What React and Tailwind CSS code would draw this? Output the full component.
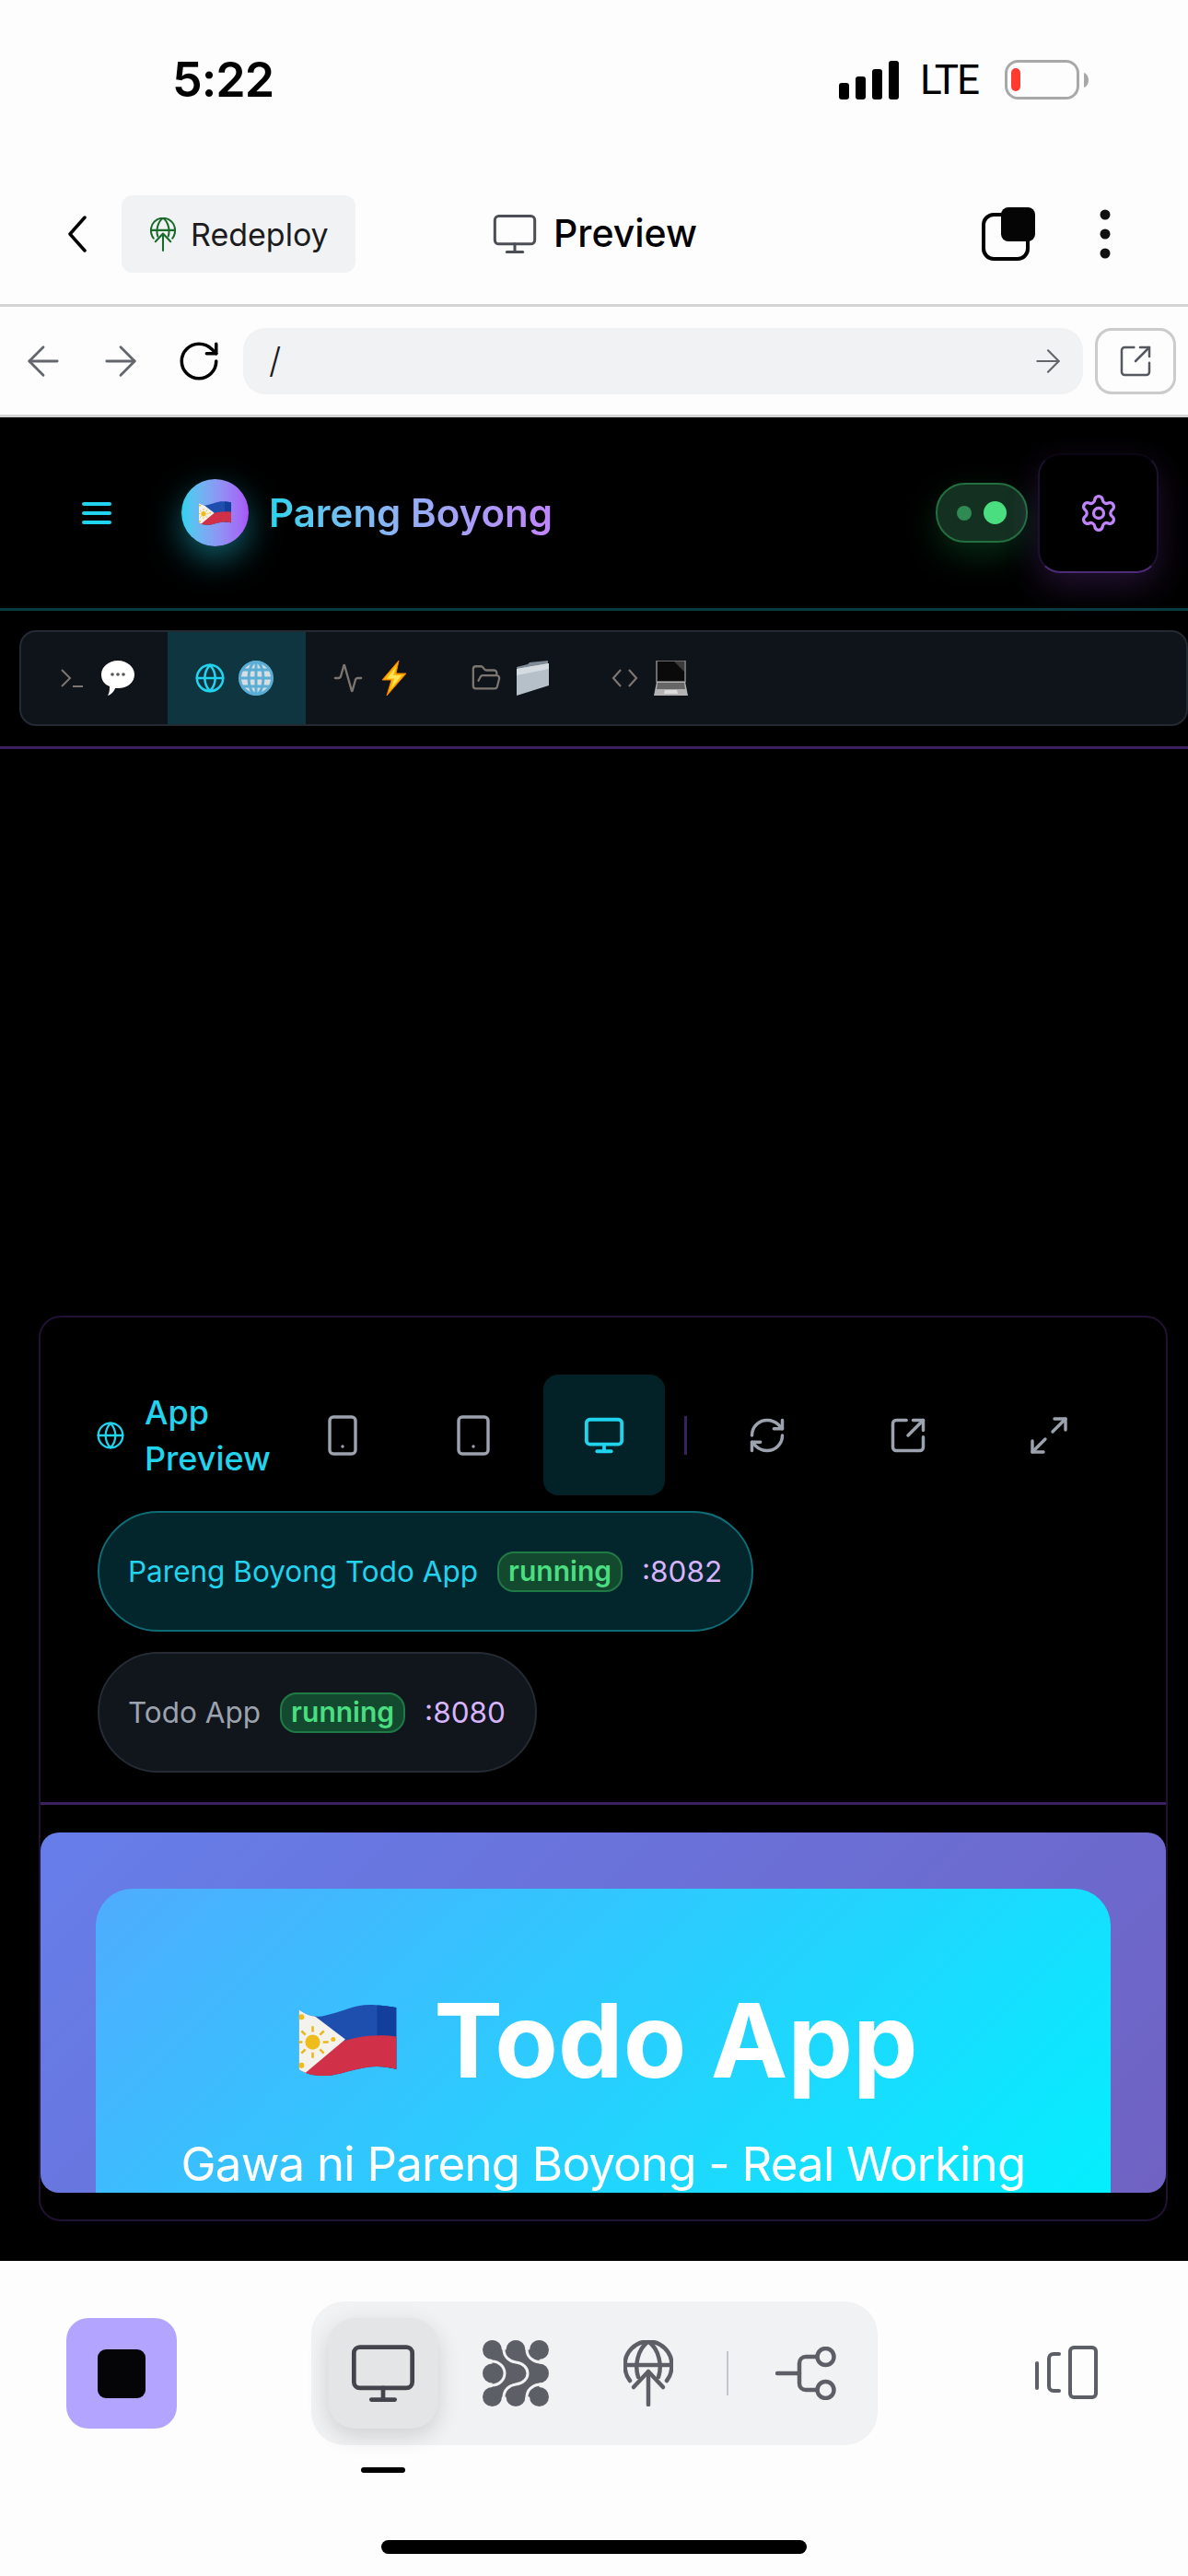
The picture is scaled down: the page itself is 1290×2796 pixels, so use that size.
import {
  ArrowLeft,
  ArrowRight,
  RotateCw,
  SquareArrowOutUpRight,
  Monitor,
  Globe,
  Activity,
  FolderOpen,
  Settings,
  Smartphone,
  Tablet,
  RefreshCw,
  Maximize2,
} from "lucide-react";

function Signal() {
  return (
    <svg width="66" height="42" viewBox="0 0 66 42" fill="#000">
      <rect x="0" y="24" width="11" height="18" rx="3" />
      <rect x="18" y="17" width="11" height="25" rx="3" />
      <rect x="36" y="9" width="11" height="33" rx="3" />
      <rect x="54" y="0" width="11" height="42" rx="3" />
    </svg>
  );
}

function Battery() {
  return (
    <svg width="92" height="44" viewBox="0 0 92 44">
      <rect x="1.5" y="1.5" width="78" height="40" rx="13" fill="none" stroke="#a8a8a8" strokeWidth="3" />
      <rect x="7" y="9" width="10" height="25" rx="5" fill="#ff3b30" />
      <path d="M86 14c3 1 5 4 5 8s-2 7-5 8z" fill="#a8a8a8" />
    </svg>
  );
}

function GlobeUp({ color, width, height, sw }) {
  return (
    <svg width={width} height={height} viewBox="0 0 54 72" fill="none" stroke={color} strokeWidth={sw} strokeLinecap="round" strokeLinejoin="round">
      <path d="M7 44C3 39 1.5 33 1.5 27 1.5 12.5 13 1.5 27 1.5S52.500 12.500 52.500 27c0 6-1.500 12-5.500 17" />
      <path d="M16 40C12 28 15 10 27 1.500 39 10 42 28 38 40" />
      <path d="M1.500 27h51" />
      <path d="M27 70V36" />
      <path d="M11 51l16-17 16 17" />
    </svg>
  );
}

function Blobs() {
  const dots = [
    [10.5, 10.5],
    [36, 10.5],
    [61.5, 10.5],
    [10.5, 36],
    [61.5, 36],
    [10.5, 61.5],
    [36, 61.5],
    [61.5, 61.5],
  ];
  return (
    <svg width="72" height="72" viewBox="0 0 72 72" fill="#5c5f66">
      {dots.map(([x, y]) => (
        <circle key={`${x}-${y}`} cx={x} cy={y} r="10.5" />
      ))}
      <rect x="10.5" y="10.5" width="51" height="51" />
      <g fill="none" stroke="#f1f2f4" strokeWidth="3">
        <path d="M23 -2V10C23 18 29 23 36 24 44 25 49 30 49 36 49 42 44 47 36 48 29 49 23 54 23 62V74" />
        <path d="M48 -2V10C48 18 54 23 62 24H74" />
        <path d="M48 74V62C48 54 54 49 62 48H74" />
        <path d="M-2 23H10C18 23 24 29 24 36 24 43 18 49 10 49H-2" />
      </g>
    </svg>
  );
}

function FlowIcon() {
  return (
    <svg width="66" height="58" viewBox="0 0 66 58" fill="none" stroke="#5c5f66" strokeWidth="4.500" strokeLinecap="round">
      <path d="M2 29h24" />
      <path d="M45 11H33c-4 0-7 3-7 7v22c0 4 3 7 7 7h12" />
      <circle cx="54.500" cy="11" r="9" />
      <circle cx="54.500" cy="47" r="9" />
    </svg>
  );
}

function PanelIcon() {
  return (
    <svg width="68" height="58" viewBox="0 0 68 58" fill="none" stroke="#5c5f66" strokeWidth="4" strokeLinecap="round">
      <rect x="38" y="2" width="28" height="54" rx="4" />
      <path d="M26 9h-6c-3 0-5 2-5 5v30c0 3 2 5 5 5h6" />
      <path d="M2 19v27" />
    </svg>
  );
}

function PhFlag({ width, height }) {
  const rays = [0, 45, 90, 135, 180, 225, 270, 315];
  return (
    <svg width={width} height={height} viewBox="0 0 105 78">
      <defs>
        <clipPath id={`wave${width}`}>
          <path d="M0 6C8 12 16 15 26 13 46 9 60 0 80 1 92 2 100 3 105 4V70C96 68 86 66 74 68 50 72 40 78 26 77 14 77 6 74 0 70Z" />
        </clipPath>
      </defs>
      <g clipPath={`url(#wave${width})`}>
        <rect width="105" height="78" fill="#1f4fae" />
        <rect x="84" width="21" height="78" fill="#123f9c" />
        <path d="M36 44C60 34 85 32 105 35V80H0V75Z" fill="#d03048" />
        <path d="M0 0L50 38 0 80Z" fill="#f4f2ec" />
        <g stroke="#e8b818" strokeWidth="2.500">
          {rays.map((a) => (
            <path key={a} d="M15 24V30" transform={`rotate(${a} 15 41)`} />
          ))}
        </g>
        <circle cx="15" cy="41" r="8" fill="#eebd1c" />
        <circle cx="3" cy="14" r="3" fill="#eebd1c" />
        <circle cx="3" cy="66" r="3" fill="#eebd1c" />
        <circle cx="37" cy="38" r="2.500" fill="#eebd1c" />
      </g>
    </svg>
  );
}

function Bubble() {
  return (
    <svg width="38" height="40" viewBox="0 0 38 40">
      <path d="M19 1c10 0 18 7 18 15 0 9-8 15-18 15-1 0-2 0-3 0-1 3-4 7-8 8 2-3 2-7 2-10C4 27 1 22 1 16 1 8 9 1 19 1z" fill="#fff" />
      <circle cx="13" cy="16" r="1.800" fill="#555" />
      <circle cx="19" cy="16" r="1.800" fill="#555" />
      <circle cx="25" cy="16" r="1.800" fill="#555" />
    </svg>
  );
}

function GlobeEmoji() {
  return (
    <svg width="38" height="40" viewBox="0 0 38 40" fill="none">
      <circle cx="19" cy="20" r="18.500" fill="#d7dde0" />
      <g stroke="#5aaed6" strokeWidth="3">
        <circle cx="19" cy="20" r="17.500" />
        <ellipse cx="19" cy="20" rx="8" ry="17.500" />
        <path d="M19 2v36M2 20h34M4 11h30M4 29h30" />
      </g>
    </svg>
  );
}

function Bolt() {
  return (
    <svg width="28" height="38" viewBox="0 0 28 38">
      <path d="M19 0L1 21h10L6 38l21-24H16z" fill="#ffb300" stroke="#f57c00" strokeWidth="1" />
      <path d="M16 7L6 19.500h8L11 30l11-14h-9z" fill="#ffe45c" />
    </svg>
  );
}

function FolderEmoji() {
  return (
    <svg width="37" height="38" viewBox="0 0 37 38">
      <path d="M1 7l12-3 2-2 20-2v4L2 12z" fill="#7e8a96" />
      <path d="M1 9l35-6v24L1 38z" fill="#b6c0c8" />
      <path d="M1 9l35-6v6L1 16z" fill="#d5dce1" />
    </svg>
  );
}

function LaptopEmoji() {
  return (
    <svg width="37" height="38" viewBox="0 0 37 38">
      <path d="M3 0h31v23H3z" fill="#0a0a0a" stroke="#8b8b8b" strokeWidth="1.500" />
      <path d="M22 1h11v11z" fill="#3a3a3a" />
      <path d="M3 23h31l3 15H0z" fill="#b4b4b4" />
      <path d="M4 24h29l1 7H3z" fill="#666" />
      <path d="M12 32h13l1 4H11z" fill="#dcdcdc" />
    </svg>
  );
}

function TerminalGlyph() {
  return (
    <svg width="24" height="20" viewBox="0 0 24 20" fill="none" stroke="#7d7670" strokeWidth="2">
      <path d="M1 1l9 9-9 9" />
      <path d="M13 19h11" />
    </svg>
  );
}

function CodeGlyph() {
  return (
    <svg width="29" height="20" viewBox="0 0 29 20" fill="none" stroke="#7d7670" strokeWidth="2.200">
      <path d="M10 1L2 10l8 9" />
      <path d="M19 1l8 9-8 9" />
    </svg>
  );
}

function Tab({ icon, emoji, active }) {
  return (
    <div className={`flex h-full w-[150px] items-center gap-[14px] pl-[29px] ${active ? "bg-[#0f3540]" : ""}`}>
      <div className="flex w-[34px] justify-center">{icon}</div>
      <div className="flex w-[38px] justify-center">{emoji}</div>
    </div>
  );
}

function ToolBtn({ children, active }) {
  return (
    <div className={`flex h-[131px] w-[132px] items-center justify-center rounded-[16px] ${active ? "bg-[#032228]" : ""}`}>
      {children}
    </div>
  );
}

function ServicePill({ name, port, active }) {
  return (
    <div
      className={`flex h-[131px] w-fit items-center gap-[21px] rounded-full border-2 pl-[31px] pr-[32px] text-[31.5px] ${
        active ? "border-[#0f6b75] bg-[#03252c] text-[#22d3ee]" : "border-[#252b34] bg-[#11151c] text-[#9ca3af]"
      }`}
    >
      <span>{name}</span>
      <span className="flex h-[44px] items-center rounded-[18px] border-2 border-[#1f7a45] bg-[#134a2f] px-[10px] text-[30px] font-semibold text-[#4ade80]">
        running
      </span>
      <span className="text-[#d8b4fe]">{port}</span>
    </div>
  );
}

export default function App() {
  return (
    <div className="flex h-[2796px] w-[1290px] flex-col overflow-hidden bg-[#fdfdfd] font-['Inter',sans-serif]">
      {/* status bar */}
      <div className="flex h-[174px] items-center justify-between pl-[187px] pr-[107px] text-black">
        <span className="text-[52px] font-semibold leading-none tracking-[-1px]">5:22</span>
        <div className="flex items-center">
          <Signal />
          <span className="ml-[22px] mr-[29px] font-['Roboto',sans-serif] text-[44px] leading-none tracking-[-2px]">LTE</span>
          <Battery />
        </div>
      </div>

      {/* top toolbar */}
      <div className="flex h-[156px] items-center pt-[4px] pl-[73px] pr-[84px]">
        <svg width="22" height="40" viewBox="0 0 22 40" fill="none" stroke="#000" strokeWidth="3.500" strokeLinecap="round" strokeLinejoin="round">
          <path d="M19 2L3 20l16 18" />
        </svg>
        <div className="ml-[37px] flex h-[84px] w-[254px] items-center gap-[16px] rounded-[12px] bg-[#f1f2f4] pl-[31px]">
          <GlobeUp color="#1a6b2a" width={28} height={37} sw={4} />
          <span className="text-[34px] text-[#1c1c1e]">Redeploy</span>
        </div>
        <div className="ml-[147px] flex items-center gap-[16px]">
          <Monitor size={52} strokeWidth={1.4} className="text-[#4b4e55]" />
          <span className="text-[41px] font-medium text-black">Preview</span>
        </div>
        <div className="ml-auto flex items-center gap-[70px]">
          <svg width="58" height="58" viewBox="0 0 58 58">
            <rect x="2" y="8" width="48" height="48" rx="11" fill="#fdfdfd" stroke="#000" strokeWidth="4" />
            <rect x="21" y="0" width="37" height="37" rx="8" fill="#050505" />
          </svg>
          <svg width="12" height="54" viewBox="0 0 12 54" fill="#111">
            <circle cx="6" cy="6" r="5.500" />
            <circle cx="6" cy="27" r="5.500" />
            <circle cx="6" cy="48" r="5.500" />
          </svg>
        </div>
      </div>
      <div className="h-[3px] bg-[#d4d4d4]" />

      {/* url row */}
      <div className="flex h-[117px] items-center pl-[21px]">
        <ArrowLeft size={52} strokeWidth={1.3} className="text-[#63666d]" />
        <ArrowRight size={52} strokeWidth={1.3} className="ml-[32px] text-[#63666d]" />
        <RotateCw size={50} strokeWidth={1.7} className="ml-[34px] text-black" />
        <div className="ml-[23px] flex h-[72px] w-[912px] items-center justify-between rounded-[24px] bg-[#f1f2f4] pl-[28px] pr-[18px]">
          <span className="text-[38px] font-light text-[#1c1c1e]">/</span>
          <ArrowRight size={40} strokeWidth={1.3} className="text-[#63666d]" />
        </div>
        <div className="ml-[13px] flex h-[72px] w-[88px] items-center justify-center rounded-[18px] border-[3px] border-[#cbcbcb]">
          <SquareArrowOutUpRight size={40} strokeWidth={1.5} className="text-[#55585f]" />
        </div>
      </div>
      <div className="h-[3px] bg-[#d4d4d4]" />

      {/* dark app */}
      <div className="flex h-[2001px] flex-col bg-black">
        <div className="flex h-[207px] shrink-0 items-center pl-[89px] pr-[32px]">
          <div className="flex w-[32px] flex-col gap-[6px]">
            <div className="h-[4px] rounded-full bg-[#22d3ee]" />
            <div className="h-[4px] rounded-full bg-[#22d3ee]" />
            <div className="h-[4px] rounded-full bg-[#22d3ee]" />
          </div>
          <div className="ml-[76px] flex h-[73px] w-[73px] items-center justify-center rounded-full bg-linear-to-r from-[#22d3ee] to-[#a855f7] shadow-[0_14px_36px_rgba(34,211,238,0.45)]">
            <PhFlag width={35} height={26} />
          </div>
          <span className="ml-[22px] bg-linear-to-r from-[#22d3ee] to-[#c084fc] bg-clip-text text-[42px] font-semibold text-transparent">
            Pareng Boyong
          </span>
          <div className="ml-auto flex h-[65px] w-[100px] items-center gap-[13px] rounded-[32px] border-2 border-[#22703f] bg-[#143021] pl-[21px] shadow-[0_14px_36px_rgba(34,197,94,0.22)]">
            <div className="h-[16px] w-[16px] rounded-full bg-[#2f8a54]" />
            <div className="h-[25px] w-[25px] rounded-full bg-[#4ade80]" />
          </div>
          <div className="ml-[11px] flex h-[130px] w-[131px] items-center justify-center rounded-[24px] border-2 border-x-[#1c1130] border-t-[#0c0614] border-b-[#4c2a78] bg-black shadow-[0_14px_36px_rgba(168,85,247,0.2)]">
            <Settings size={44} strokeWidth={1.8} className="text-[#c084fc]" />
          </div>
        </div>
        <div className="h-[3px] shrink-0 bg-[#0a3a42]" />

        {/* tabs */}
        <div className="mt-[21px] ml-[21px] flex h-[104px] shrink-0 items-stretch overflow-hidden rounded-[18px] border-2 border-[#232a33] bg-[#0f141a] pl-[9px]">
          <Tab icon={<TerminalGlyph />} emoji={<Bubble />} />
          <Tab icon={<Globe size={34} strokeWidth={1.8} className="text-[#22d3ee]" />} emoji={<GlobeEmoji />} active />
          <Tab icon={<Activity size={34} strokeWidth={1.6} className="text-[#7d7670]" />} emoji={<Bolt />} />
          <Tab icon={<FolderOpen size={34} strokeWidth={1.6} className="text-[#7d7670]" />} emoji={<FolderEmoji />} />
          <Tab icon={<CodeGlyph />} emoji={<LaptopEmoji />} />
        </div>
        <div className="mt-[22px] h-[3px] shrink-0 bg-[#3b1f5e]" />

        {/* preview card */}
        <div className="mt-[615px] ml-[42px] flex h-[983px] w-[1226px] shrink-0 flex-col rounded-[24px] border-2 border-[#1f1233]">
          <div className="mt-[62px] flex items-center pl-[60px]">
            <Globe size={32} strokeWidth={1.7} className="text-[#22d3ee]" />
            <span className="ml-[21px] w-[149px] text-[36px] font-medium leading-[50px] text-[#22d3ee]">App Preview</span>
            <ToolBtn>
              <Smartphone size={48} strokeWidth={1.7} className="text-[#9ca3af]" />
            </ToolBtn>
            <div className="ml-[10px]" />
            <ToolBtn>
              <Tablet size={48} strokeWidth={1.7} className="text-[#9ca3af]" />
            </ToolBtn>
            <div className="ml-[10px]" />
            <ToolBtn active>
              <Monitor size={46} strokeWidth={2} className="text-[#22d3ee]" />
            </ToolBtn>
            <div className="mx-[21px] h-[42px] w-[3px] bg-[#3b1f5e]" />
            <ToolBtn>
              <RefreshCw size={44} strokeWidth={1.9} className="text-[#9ca3af]" />
            </ToolBtn>
            <div className="ml-[21px]" />
            <ToolBtn>
              <SquareArrowOutUpRight size={44} strokeWidth={1.9} className="text-[#9ca3af]" />
            </ToolBtn>
            <div className="ml-[21px]" />
            <ToolBtn>
              <Maximize2 size={48} strokeWidth={1.7} className="text-[#9ca3af]" />
            </ToolBtn>
          </div>
          <div className="mt-[17px] flex flex-col gap-[22px] pl-[62px]">
            <ServicePill name="Pareng Boyong Todo App" port=":8082" active />
            <ServicePill name="Todo App" port=":8080" />
          </div>
          <div className="mt-[32px] h-[3px] shrink-0 bg-[#3b1f5e]" />
          <div className="mt-[30px] h-[391px] shrink-0 overflow-hidden rounded-[20px] bg-[linear-gradient(135deg,#667eea,#764ba2_180%)] px-[60px] pt-[61px]">
            <div className="h-[400px] rounded-t-[40px] bg-[linear-gradient(135deg,#4facfe,#00f2fe)] pt-[94px] text-center text-white">
              <div className="ml-[11px] flex items-center justify-center gap-[40px] leading-none">
                <PhFlag width={107} height={79} />
                <span className="text-[112px] font-bold leading-[140px]">Todo App</span>
              </div>
              <div className="mt-[34px] text-[51px] leading-[62px] tracking-[-0.8px]">Gawa ni Pareng Boyong - Real Working</div>
            </div>
          </div>
        </div>
      </div>

      {/* bottom nav */}
      <div className="flex flex-1 flex-col">
        <div className="flex items-start pl-[72px] pt-[44px]">
          <div className="mt-[18px] flex h-[120px] w-[120px] items-center justify-center rounded-[24px] bg-[#b3a5ff]">
            <div className="h-[53px] w-[52px] rounded-[9px] bg-[#050507]" />
          </div>
          <div className="ml-[146px] flex flex-col">
            <div className="flex h-[156px] w-[615px] items-center rounded-[36px] bg-[#f1f2f4] pl-[18px]">
              <div className="flex h-[120px] w-[120px] items-center justify-center rounded-[30px] bg-[#e4e5e7] shadow-[0_8px_24px_rgba(0,0,0,0.14)]">
                <Monitor size={76} strokeWidth={1.5} className="text-[#43454c]" />
              </div>
              <div className="ml-[24px] flex w-[120px] justify-center">
                <Blobs />
              </div>
              <div className="ml-[24px] flex w-[120px] justify-center">
                <GlobeUp color="#5c5f66" width={54} height={72} sw={4.5} />
              </div>
              <div className="ml-[25px] mr-[24px] h-[48px] w-[2px] bg-[#c4c5c8]" />
              <div className="flex w-[120px] justify-center">
                <FlowIcon />
              </div>
            </div>
            <div className="mt-[24px] ml-[54px] h-[6px] w-[48px] rounded-full bg-black" />
          </div>
          <div className="ml-[171px] mt-[48px]">
            <PanelIcon />
          </div>
        </div>
        <div className="mt-[73px] h-[15px] w-[462px] self-center rounded-full bg-black" />
      </div>
    </div>
  );
}
